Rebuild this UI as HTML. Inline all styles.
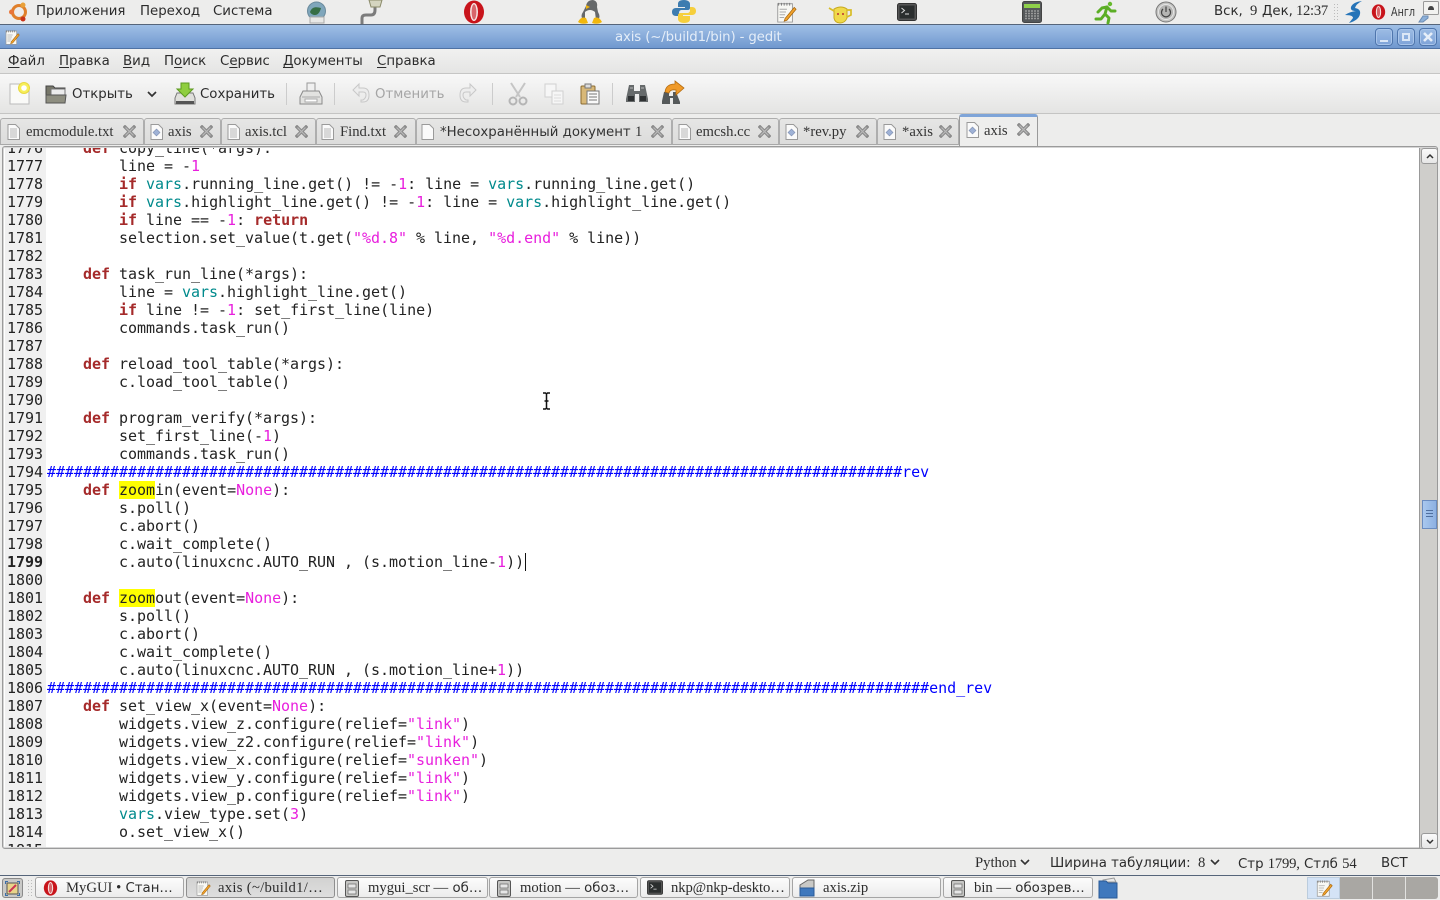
<!DOCTYPE html>
<html lang="ru"><head><meta charset="utf-8"><title>axis (~/build1/bin) - gedit</title>
<style>
html,body{margin:0;padding:0;width:1440px;height:900px;overflow:hidden;background:#ededec}
body{position:relative;font-family:"DejaVu Sans",sans-serif;font-size:13.33px;color:#2c2c2c}
.a{position:absolute;white-space:pre}
svg{position:absolute;overflow:visible}
.s{font-family:"Liberation Serif",serif;font-size:14.67px}
u{text-decoration:underline;text-underline-offset:2px}
#top{position:absolute;left:0;top:0;width:1440px;height:24px;background:#ededec;border-bottom:1px solid #56657a}
#title{position:absolute;left:0;top:25px;width:1440px;height:23px;background:linear-gradient(#9fbfe6,#7098cf);border-bottom:1px solid #4f72a4}
#menu{position:absolute;left:0;top:49px;width:1440px;height:24px;background:linear-gradient(#f1f1f0,#e5e5e4);border-bottom:1px solid #c6c6c5}
#tool{position:absolute;left:0;top:74px;width:1440px;height:39px;background:linear-gradient(#f8f8f8,#e4e4e3);border-bottom:1px solid #c4c4c3}
#tabs{position:absolute;left:0;top:114px;width:1440px;height:33px;background:#ededec}
.tab{position:absolute;top:4px;height:27px;background:linear-gradient(#e6e6e5,#dcdcdb);border:1px solid #aeaeae;border-bottom:1px solid #a8a8a8;border-radius:3px 3px 0 0;box-sizing:border-box}
.tab.on{top:0;height:32px;background:#eeeeed;border-color:#9a9a9a;border-top:3px solid #7ea4d8;border-bottom:none;z-index:2}
.tl{color:#333}
#frame{position:absolute;left:2px;top:146px;width:1436px;height:703px;box-sizing:border-box;border:1px solid #9b9b9b;border-radius:3px;background:#fff;box-shadow:inset 0 0 0 1px #d5d5d5}
#ed{position:absolute;left:5px;top:148px;width:1414px;height:699px;overflow:hidden;background:#fff;border-left:0}
#gut{position:absolute;left:0;top:-9px;width:41px;height:730px;background:#f0f0f0}
pre{margin:0;font:15px/18px "DejaVu Sans Mono",monospace;color:#222}
#nums{position:absolute;left:1px;top:-9px;width:37px;text-align:right;letter-spacing:-.03px}
#code{position:absolute;left:42px;top:-9px;letter-spacing:-.03px}
b{color:#a52a2a}
.v{color:#008a8c}
.n{color:#e81fdd}
.c{color:#0000ff}
mark{background:#ffff00;color:inherit}
#sb{position:absolute;left:1419px;top:148px;width:19px;height:700px;background:#cfcecb;box-sizing:border-box;border-left:1px solid #999;border-right:1px solid #999}
.ar{position:absolute;left:1px;width:15px;height:14px;background:linear-gradient(#fafafa,#e6e6e6);border:1px solid #999;border-radius:3px;box-sizing:content-box}
#thumb{position:absolute;left:2px;top:352px;height:29px;background:linear-gradient(90deg,#a9c8ee,#8cb0e2);border:1px solid #6a8cc0;box-sizing:border-box;width:15px}
#status{position:absolute;left:0;top:850px;width:1440px;height:25px;background:#ededec;border-bottom:1px solid #56657a}
#bottom{position:absolute;left:0;top:876px;width:1440px;height:24px;background:#ededec}
.btn{position:absolute;top:1px;height:21px;box-sizing:border-box;background:linear-gradient(#fcfcfc,#ececec);border:1px solid #a5a5a5;border-radius:3px}
.btn.on{background:linear-gradient(#d2d2d1,#dedede);border-color:#8f8f8f}
.wb{position:absolute;top:3px;width:18px;height:18px;box-sizing:border-box;border:1px solid #4f76ad;border-radius:4px;background:linear-gradient(#9dbce4,#7ea3d8);box-shadow:inset 0 0 0 1px #a9c5ea}
</style></head>
<body>
<svg width="0" height="0" style="position:absolute"><defs>
<symbol id="x" viewBox="0 0 13 13"><path d="M2 2L11 11M11 2L2 11" stroke="#8c8c8c" stroke-width="3.4" stroke-linecap="square"/><path d="M2.5 2.5L10.5 10.5M10.5 2.5L2.5 10.5" stroke="#b9b9b9" stroke-width="1.2"/></symbol>
<symbol id="d" viewBox="0 0 13 16"><path d="M1 .5H8.5L12.5 4.5V15.5H1Z" fill="#fafafa" stroke="#9a9a9a"/><path d="M3 5H10M3 7H10M3 9H10M3 11H10M3 13H10" stroke="#b5b5b5"/></symbol>
<symbol id="e" viewBox="0 0 13 16"><path d="M1 .5H8.5L12.5 4.5V15.5H1Z" fill="#fafafa" stroke="#9a9a9a"/></symbol>
<symbol id="p" viewBox="0 0 13 16"><path d="M1 .5H8.5L12.5 4.5V15.5H1Z" fill="#fafafa" stroke="#9a9a9a"/><path d="M6.5 5L10 8.5L6.5 12L3 8.5Z" fill="#9fb2d6" stroke="#7f8fb0" stroke-width=".6"/></symbol>
<symbol id="o" viewBox="0 0 22 24"><ellipse cx="11" cy="12" rx="10" ry="11.5" fill="#c8141b"/><ellipse cx="11" cy="12" rx="4" ry="9" fill="#f6e4e2"/><ellipse cx="11" cy="12" rx="2.4" ry="7.6" fill="#d8656a"/></symbol>
<symbol id="np" viewBox="0 0 22 24"><path d="M2 3H18V23H2Z" fill="#f8f8f4" stroke="#999"/><path d="M3 2V5M6 2V5M9 2V5M12 2V5M15 2V5" stroke="#777"/><path d="M4 9H12M4 12H11M4 15H10M4 18H9" stroke="#aaa"/><path d="M20 7L10 19L9 22L12 21L22 9Z" fill="#f2a32c" stroke="#a5640c" stroke-width=".8"/></symbol>
<symbol id="fm" viewBox="0 0 14 17"><rect x=".5" y=".5" width="13" height="16" rx="1.5" fill="#c6c6c4" stroke="#555"/><rect x="3" y="4" width="8" height="4" fill="#e6e6e6" stroke="#666" stroke-width=".7"/><rect x="3" y="10" width="8" height="4" fill="#e6e6e6" stroke="#666" stroke-width=".7"/></symbol>
<symbol id="tm" viewBox="0 0 20 18"><rect x=".5" y=".5" width="19" height="17" rx="2" fill="#555" stroke="#333"/><rect x="2.5" y="2.5" width="15" height="13" fill="#2b2e2e"/><path d="M4.5 5L7.5 7.5L4.5 10M8 11H12" stroke="#ddd" fill="none"/></symbol>
</defs></svg>

<div id="top">
<svg style="left:8px;top:1px" width="21" height="21" viewBox="0 0 21 21"><circle cx="11" cy="11" r="6.5" fill="none" stroke="#e0802c" stroke-width="3"/><circle cx="3.5" cy="11" r="2.5" fill="#e9763a"/><circle cx="15" cy="4" r="2.5" fill="#e9a13a"/><circle cx="15" cy="18" r="2.5" fill="#c9341a"/></svg>
<div class="a" style="left:36px;top:4px">Приложения</div>
<div class="a" style="left:140px;top:4px">Переход</div>
<div class="a" style="left:213px;top:4px">Система</div>
<svg style="left:306px;top:1px" width="21" height="23" viewBox="0 0 21 23"><circle cx="10.5" cy="10" r="9" fill="#7fa6bb" stroke="#6a8a9c"/><path d="M4 11C6 5 11 6 15 7C14 11 12 14 9 14C7 14 5 13 4 11Z" fill="#366e45"/><path d="M4 16H18V22H4Z" fill="#e8e8e6" stroke="#aaa"/></svg>
<svg style="left:360px;top:0" width="24" height="24" viewBox="0 0 24 24"><path d="M2 24V18Q2 15 6 15H11Q15 15 15 10V6" fill="none" stroke="#7c7c7c" stroke-width="3"/><path d="M9 0H22L20 7H11Z" fill="#d5d5c0" stroke="#8b8b6a"/></svg>
<svg style="left:463px;top:0" width="22" height="24"><use href="#o" width="22" height="24"/></svg>
<svg style="left:578px;top:0" width="24" height="24" viewBox="0 0 24 24"><path d="M8 6Q9 0 15 0Q20 1 19 7L20 12Q23 17 20 20H5Q2 16 5 12Z" fill="#66696a"/><path d="M7 12Q12 8 17 12L18 20H7Z" fill="#f2f2ee"/><path d="M0 22Q3 16 8 18L10 23Q4 25 0 22ZM24 22Q21 16 16 18L14 23Q20 25 24 22Z" fill="#f1b70c"/><path d="M8 5L12 7L8 9Z" fill="#efb30d"/></svg>
<svg style="left:671px;top:-1px" width="26" height="25" viewBox="0 0 26 25"><path d="M13 1C8 1 7 3 7 5V8H14V9H5C2 9 1 11 1 13S2 17 5 17H8V14C8 12 9 11 11 11H17C18 11 19 10 19 9V5C19 3 17 1 13 1Z" fill="#3d7cb0"/><path d="M13 24C18 24 19 22 19 20V17H12V16H21C24 16 25 14 25 12S24 8 21 8H19V11C19 13 18 14 16 14H10C8 14 7 15 7 16V20C7 22 9 24 13 24Z" fill="#f6cf3c"/></svg>
<svg style="left:775px;top:1px" width="22" height="22"><use href="#np" width="22" height="22"/></svg>
<svg style="left:828px;top:1px" width="24" height="23" viewBox="0 0 24 23"><path d="M6 8Q13 4 19 8L19 17Q17 22 12 22Q7 22 6 17Z" fill="#f0d94a" stroke="#c7a91e"/><path d="M19 9H23V14L19 16M6 10L1 7" fill="none" stroke="#d8bc26" stroke-width="1.7"/><circle cx="10" cy="13" r="1" fill="#b33"/><circle cx="15" cy="13" r="1" fill="#b33"/></svg>
<svg style="left:897px;top:3px" width="20" height="18"><use href="#tm" width="20" height="18"/></svg>
<svg style="left:1022px;top:1px" width="20" height="22" viewBox="0 0 20 22"><rect x=".5" y=".5" width="19" height="21" rx="2" fill="#55585a" stroke="#444"/><rect x="2" y="3" width="16" height="4" fill="#8fd04a"/><path d="M3 10H17M3 12.5H17M3 15H17M3 17.5H17" stroke="#9a9a9a" stroke-width="1.4" stroke-dasharray="2 1"/></svg>
<svg style="left:1095px;top:1px" width="21" height="23" viewBox="0 0 21 23"><circle cx="15" cy="3" r="2.2" fill="#66b92c"/><path d="M12 6L7 7L3 11M12 6L10 13L14 17L13 22M10 13L6 18L1 18M12 6L16 10L20 10" fill="none" stroke="#5cae25" stroke-width="3" stroke-linecap="round" stroke-linejoin="round"/></svg>
<svg style="left:1155px;top:1px" width="22" height="22" viewBox="0 0 22 22"><circle cx="11" cy="11" r="10" fill="#c5c5c3" stroke="#777"/><circle cx="11" cy="11" r="7.5" fill="#b5b5b3" stroke="#e5e5e5"/><path d="M8 8A4.5 4.5 0 1 0 14 8M11 5.5V11" fill="none" stroke="#444" stroke-width="1.2"/></svg>
<div class="a" style="left:1214px;top:4px">Вск,</div>
<div class="a s" style="left:1250px;top:3px">9</div>
<div class="a" style="left:1262px;top:4px">Дек,</div>
<div class="a s" style="left:1296px;top:3px;letter-spacing:-.3px">12:37</div>
<svg style="left:1333px;top:4px" width="6" height="16"><path d="M1.5 0V16M4.5 0V16" stroke="#bbb" stroke-dasharray="1 2"/></svg>
<svg style="left:1344px;top:1px" width="19" height="22" viewBox="0 0 19 22"><path d="M18 0Q9 1 7 6Q6 10 12 10Q5 11 1 14Q9 14 9 17L5 22Q15 19 16 13Q17 8 11 7Q12 3 18 0Z" fill="#2674b8"/></svg>
<svg style="left:1371px;top:4px" width="15" height="16"><use href="#o" width="15" height="16"/></svg>
<div class="a" style="left:1391px;top:5px;font-size:12px;transform:scaleX(.8);transform-origin:0 0;color:#333">Англ</div>
<svg style="left:1418px;top:1px" width="21" height="22" viewBox="0 0 21 22"><rect x="5.5" y=".5" width="15" height="13" rx="1" fill="#f2f2f0" stroke="#999"/><path d="M10 9Q10 5 13 5Q16 5 16 9Z" fill="#444"/><path d="M1 21L5 15H10V17L5 21Z" fill="#8db0d8" stroke="#6c8cb4"/></svg>
</div>

<div id="title">
<svg style="left:4px;top:4px" width="16" height="16"><use href="#np" width="16" height="16"/></svg>
<div class="a" style="left:615px;top:5px;color:#e4edf8;letter-spacing:-.15px">axis (~/build1/bin) - gedit</div>
<div class="wb" style="left:1375px"><div style="position:absolute;left:4px;top:11px;width:8px;height:2px;background:#dbe7f6"></div></div>
<div class="wb" style="left:1397px"><div style="position:absolute;left:4px;top:4px;width:8px;height:8px;border:2px solid #dbe7f6;box-sizing:border-box"></div></div>
<div class="wb" style="left:1419px"><svg style="left:2px;top:2px" width="12" height="12"><path d="M2 2L10 10M10 2L2 10" stroke="#e6eef9" stroke-width="2.6"/></svg></div>
</div>

<div id="menu">
<div class="a" style="left:8px;top:5px"><u>Ф</u>айл</div>
<div class="a" style="left:59px;top:5px"><u>П</u>равка</div>
<div class="a" style="left:123px;top:5px"><u>В</u>ид</div>
<div class="a" style="left:164px;top:5px">П<u>о</u>иск</div>
<div class="a" style="left:220px;top:5px">С<u>е</u>рвис</div>
<div class="a" style="left:283px;top:5px"><u>Д</u>окументы</div>
<div class="a" style="left:377px;top:5px"><u>С</u>правка</div>
</div>

<div id="tool">
<svg style="left:9px;top:8px" width="22" height="24" viewBox="0 0 22 24"><path d="M1 2H15L20 7V22H1Z" fill="#fafaf8" stroke="#bbb"/><circle cx="15" cy="6" r="5.500" fill="#f7ef5a" stroke="#e8d840"/><circle cx="15" cy="6" r="2.800" fill="#fff"/></svg>
<svg style="left:45px;top:9px" width="22" height="22" viewBox="0 0 22 22"><path d="M1 3H8L10 5H20V20H1Z" fill="#77776a" stroke="#444"/><rect x="6" y="6" width="14" height="8" fill="#ececec" stroke="#777"/><path d="M1 12H21L20 20H1Z" fill="#8e8e80" stroke="#555"/></svg>
<div class="a" style="left:72px;top:13px">Открыть</div>
<svg style="left:147px;top:17px" width="10" height="7"><path d="M1 1L5 5L9 1" fill="none" stroke="#333" stroke-width="1.700"/></svg>
<svg style="left:174px;top:8px" width="22" height="24" viewBox="0 0 22 24"><path d="M1 16L3 11H19L21 16V22H1Z" fill="#e0e0dc" stroke="#777"/><path d="M2 19H20V22H2Z" fill="#555"/><path d="M7 1H15V7H19L11 15L3 7H7Z" fill="#8fce3e" stroke="#5d9a20"/></svg>
<div class="a" style="left:200px;top:13px">Сохранить</div>
<div style="position:absolute;left:286px;top:9px;width:1px;height:22px;background:#ccc"></div>
<svg style="left:299px;top:8px" width="24" height="24" viewBox="0 0 24 24"><rect x="8" y="1" width="8" height="9" fill="#f0f0f0" stroke="#999"/><path d="M4 9H20L23 15V22H1V15Z" fill="#e2e2e0" stroke="#8a8a8a"/><path d="M3 15H21" stroke="#aaa"/><rect x="6" y="17" width="12" height="3" fill="#fff" stroke="#aaa"/></svg>
<div style="position:absolute;left:334px;top:9px;width:1px;height:22px;background:#ccc"></div>
<svg style="left:352px;top:9px" width="18" height="20" viewBox="0 0 18 20"><path d="M7 1L1 7L7 13V9H11Q14 9 14 12T11 17H9V19H11Q17 19 17 12T11 5H7Z" fill="#ededed" stroke="#c8c8c8"/></svg>
<div class="a" style="left:375px;top:13px;color:#a5a5a5">Отменить</div>
<svg style="left:459px;top:9px" width="18" height="20" viewBox="0 0 18 20"><path d="M11 1L17 7L11 13V9H7Q4 9 4 12T7 17H9V19H7Q1 19 1 12T7 5H11Z" fill="#ededed" stroke="#c8c8c8"/></svg>
<div style="position:absolute;left:492px;top:9px;width:1px;height:22px;background:#ccc"></div>
<svg style="left:508px;top:8px" width="20" height="24" viewBox="0 0 20 24"><path d="M3 1L12 15M17 1L8 15" stroke="#c5c5c5" stroke-width="2"/><circle cx="5" cy="19" r="3.500" fill="none" stroke="#b5b5b5" stroke-width="2"/><circle cx="15" cy="19" r="3.500" fill="none" stroke="#b5b5b5" stroke-width="2"/></svg>
<svg style="left:544px;top:9px" width="20" height="22" viewBox="0 0 20 22"><rect x="1" y="1" width="11" height="13" fill="#f6f6f6" stroke="#d0d0d0"/><rect x="8" y="8" width="11" height="13" fill="#f6f6f6" stroke="#d0d0d0"/><path d="M10 12H17M10 15H17M10 18H17" stroke="#dcdcdc"/></svg>
<svg style="left:580px;top:9px" width="20" height="22" viewBox="0 0 20 22"><rect x="1" y="3" width="14" height="18" rx="1" fill="#d8b878" stroke="#8a6a30"/><rect x="5" y="1" width="6" height="4" fill="#ddd" stroke="#777"/><rect x="7" y="8" width="12" height="13" fill="#fafafa" stroke="#777"/><path d="M9 11H17M9 14H17M9 17H17" stroke="#777"/></svg>
<div style="position:absolute;left:612px;top:9px;width:1px;height:22px;background:#ccc"></div>
<svg style="left:626px;top:10px" width="22" height="19" viewBox="0 0 22 19"><path d="M3 1H8V7H14V1H19L22 15V18H13V10H9V18H0V15Z" fill="#666a6b"/><path d="M2 12H8V17H2ZM14 12H20V17H14Z" fill="#2f3233"/><path d="M4 4H7M15 4H18" stroke="#bbb"/></svg>
<svg style="left:662px;top:7px" width="23" height="24" viewBox="0 0 23 24"><path d="M2 11H7V15H11V11H14L18 21V23H11V17H8V23H0V20Z" fill="#55595a"/><path d="M3 11Q4 3 13 3L13 0L22 7L14 14V9Q8 8 7 12Z" fill="#f09a28" stroke="#b56c10" stroke-width=".8"/></svg>
</div>

<div id="tabs">
<div class="tab" style="left:0;width:144px"><svg style="left:6px;top:5px" width="13" height="16"><use href="#d"/></svg><div class="a tl s" style="left:25px;top:5px">emcmodule.txt</div><svg style="left:122px;top:6px" width="13" height="13"><use href="#x"/></svg></div>
<div class="tab" style="left:144px;width:77px"><svg style="left:5px;top:5px" width="13" height="16"><use href="#p"/></svg><div class="a tl s" style="left:23px;top:5px">axis</div><svg style="left:55px;top:6px" width="13" height="13"><use href="#x"/></svg></div>
<div class="tab" style="left:221px;width:95px"><svg style="left:5px;top:5px" width="13" height="16"><use href="#d"/></svg><div class="a tl s" style="left:23px;top:5px">axis.tcl</div><svg style="left:73px;top:6px" width="13" height="13"><use href="#x"/></svg></div>
<div class="tab" style="left:316px;width:100px"><svg style="left:4px;top:5px" width="13" height="16"><use href="#d"/></svg><div class="a tl s" style="left:23px;top:5px">Find.txt</div><svg style="left:77px;top:6px" width="13" height="13"><use href="#x"/></svg></div>
<div class="tab" style="left:416px;width:256px"><svg style="left:4px;top:5px" width="13" height="16"><use href="#e"/></svg><div class="a tl" style="left:23px;top:5px">*Несохранённый документ <span class="s">1</span></div><svg style="left:234px;top:6px" width="13" height="13"><use href="#x"/></svg></div>
<div class="tab" style="left:672px;width:107px"><svg style="left:5px;top:5px" width="13" height="16"><use href="#d"/></svg><div class="a tl s" style="left:23px;top:5px">emcsh.cc</div><svg style="left:85px;top:6px" width="13" height="13"><use href="#x"/></svg></div>
<div class="tab" style="left:779px;width:98px"><svg style="left:5px;top:5px" width="13" height="16"><use href="#p"/></svg><div class="a tl s" style="left:23px;top:5px">*rev.py</div><svg style="left:76px;top:6px" width="13" height="13"><use href="#x"/></svg></div>
<div class="tab" style="left:877px;width:82px"><svg style="left:5px;top:5px" width="13" height="16"><use href="#p"/></svg><div class="a tl s" style="left:24px;top:5px">*axis</div><svg style="left:61px;top:6px" width="13" height="13"><use href="#x"/></svg></div>
<div class="tab on" style="left:959px;width:79px"><svg style="left:6px;top:5px" width="13" height="16"><use href="#p"/></svg><div class="a tl s" style="left:24px;top:6px">axis</div><svg style="left:57px;top:6px" width="13" height="13"><use href="#x"/></svg></div>
</div>

<div id="frame"></div>
<div id="ed">
<div id="gut"></div>
<pre id="nums">1776
1777
1778
1779
1780
1781
1782
1783
1784
1785
1786
1787
1788
1789
1790
1791
1792
1793
1794
1795
1796
1797
1798
<strong>1799</strong>
1800
1801
1802
1803
1804
1805
1806
1807
1808
1809
1810
1811
1812
1813
1814
1815</pre>
<pre id="code">    <b>def</b> copy_line(*args):
        line = -<span class="n">1</span>
        <b>if</b> <span class="v">vars</span>.running_line.get() != -<span class="n">1</span>: line = <span class="v">vars</span>.running_line.get()
        <b>if</b> <span class="v">vars</span>.highlight_line.get() != -<span class="n">1</span>: line = <span class="v">vars</span>.highlight_line.get()
        <b>if</b> line == -<span class="n">1</span>: <b>return</b>
        selection.set_value(t.get(<span class="n">"%d.8"</span> % line, <span class="n">"%d.end"</span> % line))

    <b>def</b> task_run_line(*args):
        line = <span class="v">vars</span>.highlight_line.get()
        <b>if</b> line != -<span class="n">1</span>: set_first_line(line)
        commands.task_run()

    <b>def</b> reload_tool_table(*args):
        c.load_tool_table()

    <b>def</b> program_verify(*args):
        set_first_line(-<span class="n">1</span>)
        commands.task_run()
<span class="c">###############################################################################################rev</span>
    <b>def</b> <mark>zoom</mark>in(event=<span class="n">None</span>):
        s.poll()
        c.abort()
        c.wait_complete()
        c.auto(linuxcnc.AUTO_RUN , (s.motion_line-<span class="n">1</span>))<span style="border-left:1px solid #111;margin-left:1px"></span>

    <b>def</b> <mark>zoom</mark>out(event=<span class="n">None</span>):
        s.poll()
        c.abort()
        c.wait_complete()
        c.auto(linuxcnc.AUTO_RUN , (s.motion_line+<span class="n">1</span>))
<span class="c">##################################################################################################end_rev</span>
    <b>def</b> set_view_x(event=<span class="n">None</span>):
        widgets.view_z.configure(relief=<span class="n">"link"</span>)
        widgets.view_z2.configure(relief=<span class="n">"link"</span>)
        widgets.view_x.configure(relief=<span class="n">"sunken"</span>)
        widgets.view_y.configure(relief=<span class="n">"link"</span>)
        widgets.view_p.configure(relief=<span class="n">"link"</span>)
        <span class="v">vars</span>.view_type.set(<span class="n">3</span>)
        o.set_view_x()
</pre>
</div>
<svg style="left:541px;top:392px" width="11" height="18" viewBox="0 0 11 18"><path d="M2 1H4.500L5.500 2L6.500 1H9M5.500 2V16M2 17H4.500L5.500 16L6.500 17H9M3.500 9H7.500" fill="none" stroke="#111" stroke-width="1.500"/></svg>

<div id="sb">
<div class="ar" style="top:0"><svg style="left:4px;top:4px" width="8" height="6"><path d="M1 5L4 2L7 5" fill="none" stroke="#333" stroke-width="1.500"/></svg></div>
<div id="thumb"><div style="position:absolute;left:3px;top:9px;width:7px;height:1px;background:#4f6f9f;box-shadow:0 3px 0 #4f6f9f,0 6px 0 #4f6f9f"></div></div>
<div class="ar" style="top:685px"><svg style="left:4px;top:5px" width="8" height="6"><path d="M1 1L4 4L7 1" fill="none" stroke="#333" stroke-width="1.500"/></svg></div>
</div>

<div id="status">
<div class="a s" style="left:975px;top:5px">Python</div>
<svg style="left:1020px;top:9px" width="10" height="7"><path d="M1 1L5 5L9 1" fill="none" stroke="#333" stroke-width="1.600"/></svg>
<div class="a" style="left:1050px;top:6px">Ширина табуляции:</div>
<div class="a s" style="left:1198px;top:5px">8</div>
<svg style="left:1210px;top:9px" width="10" height="7"><path d="M1 1L5 5L9 1" fill="none" stroke="#333" stroke-width="1.600"/></svg>
<div class="a" style="left:1238px;top:6px">Стр <span class="s" style="letter-spacing:-.2px">1799,</span> Стлб <span class="s">54</span></div>
<div class="a" style="left:1381px;top:6px">ВСТ</div>
</div>

<div id="bottom">
<div style="position:absolute;left:2px;top:2px;width:21px;height:20px;box-sizing:border-box;background:#c9c9c7;border:1px solid #8a8a8a;border-radius:3px"><svg style="left:2px;top:2px" width="15" height="15" viewBox="0 0 15 15"><rect x="2" y="2" width="11" height="11" fill="#e8d48a" stroke="#555"/><path d="M4 11L11 4" stroke="#c35" stroke-width="2"/><path d="M0 0H3V1H1V3H0ZM15 0H12V1H14V3H15ZM0 15H3V14H1V12H0ZM15 15H12V14H14V12H15Z" fill="#3b6ea8"/></svg></div>
<svg style="left:27px;top:4px" width="6" height="18"><path d="M1.500 0V18M4.500 0V18" stroke="#bbb" stroke-dasharray="1 2"/></svg>
<div class="btn" style="left:35px;width:149px"><svg style="left:7px;top:2px" width="15" height="16"><use href="#o" width="15" height="16"/></svg><div class="a" style="left:30px;top:2px"><span class="s">MyGUI •</span> Стан…</div></div>
<div class="btn on" style="left:186px;width:149px"><svg style="left:8px;top:2px" width="16" height="16"><use href="#np" width="16" height="16"/></svg><div class="a s" style="left:31px;top:2px;letter-spacing:.3px">axis (~/build1/…</div></div>
<div class="btn" style="left:337px;width:151px"><svg style="left:7px;top:2px" width="14" height="17"><use href="#fm" width="14" height="17"/></svg><div class="a" style="left:30px;top:2px"><span class="s">mygui_scr —</span> об…</div></div>
<div class="btn" style="left:489px;width:149px"><svg style="left:7px;top:2px" width="14" height="17"><use href="#fm" width="14" height="17"/></svg><div class="a" style="left:30px;top:2px"><span class="s">motion —</span> обоз…</div></div>
<div class="btn" style="left:640px;width:150px"><svg style="left:6px;top:2px" width="16" height="15"><use href="#tm" width="16" height="15"/></svg><div class="a s" style="left:30px;top:2px;letter-spacing:-.1px">nkp@nkp-deskto…</div></div>
<div class="btn" style="left:792px;width:149px"><svg style="left:6px;top:1px" width="17" height="18" viewBox="0 0 17 18"><path d="M1 6L9 1H15V14H1Z" fill="#c9c9c6" stroke="#666"/><path d="M1 9H15V17H1Z" fill="#3f78bd" stroke="#2a5a98"/></svg><div class="a s" style="left:30px;top:2px">axis.zip</div></div>
<div class="btn" style="left:943px;width:150px"><svg style="left:7px;top:2px" width="14" height="17"><use href="#fm" width="14" height="17"/></svg><div class="a" style="left:30px;top:2px"><span class="s">bin —</span> обозрев…</div></div>
<svg style="left:1098px;top:1px" width="21" height="22" viewBox="0 0 21 22"><path d="M5 3L16 1L18 5H5Z" fill="#e8e8e8" stroke="#999"/><path d="M1 4H8L10 6H19V21H1Z" fill="#3f78bd" stroke="#2a5a98"/></svg>
<div style="position:absolute;left:1307px;top:1px;width:131px;height:22px;background:#a9a7a3;border-radius:0 3px 3px 0"></div>
<div style="position:absolute;left:1307px;top:1px;width:33px;height:22px;box-sizing:border-box;background:#d4e3f6;border:1px solid #bcd"></div>
<div style="position:absolute;left:1372px;top:1px;width:1px;height:22px;background:#e2e2e0"></div>
<div style="position:absolute;left:1405px;top:1px;width:1px;height:22px;background:#e2e2e0"></div>
<svg style="left:1315px;top:3px" width="18" height="18"><use href="#np" width="18" height="18"/></svg>
</div>
</body></html>
